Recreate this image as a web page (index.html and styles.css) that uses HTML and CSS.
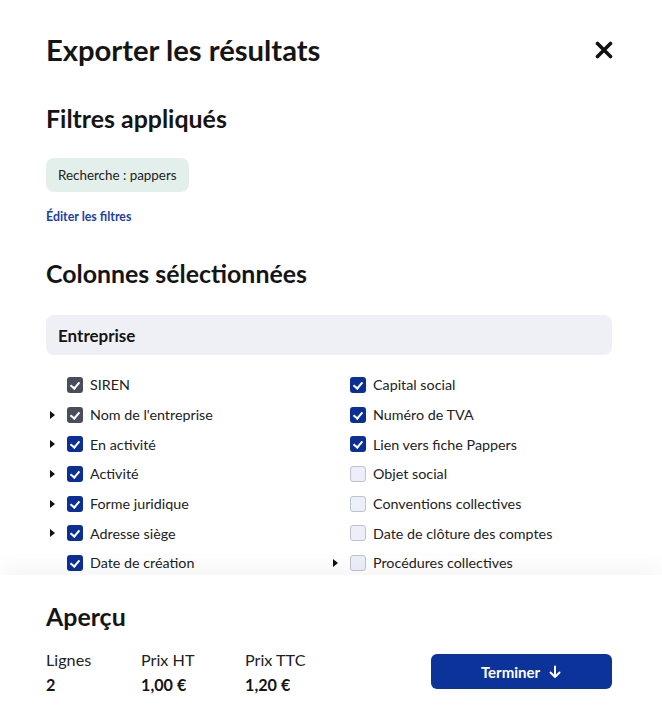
FILE: index.html
```html
<!DOCTYPE html>
<html lang="fr">
<head>
<meta charset="utf-8">
<link rel="stylesheet" href="styles.css">
</head>
<body>
<div class="modal">
  <div class="scroll">
    <header class="head">
      <h1 class="title">Exporter les résultats</h1>
      <button class="close" aria-label="Fermer">
        <svg width="18" height="18" viewBox="0 0 18 18"><path d="M2.5 2.5 L15.5 15.5 M15.5 2.5 L2.5 15.5" stroke="#111" stroke-width="3.6" stroke-linecap="round"/></svg>
      </button>
    </header>

    <h2 class="h2 h2-filters">Filtres appliqués</h2>
    <div class="chips"><span class="chip">Recherche : pappers</span></div>
    <a class="edit" href="#">Éditer les filtres</a>

    <h2 class="h2 h2-cols">Colonnes sélectionnées</h2>
    <div class="group">Entreprise</div>

    <div class="cols">
      <div class="col">
        <div class="row"><span class="caret none"></span><span class="cb locked"></span><span>SIREN</span></div>
        <div class="row"><span class="caret"></span><span class="cb locked"></span><span>Nom de l'entreprise</span></div>
        <div class="row"><span class="caret"></span><span class="cb on"></span><span>En activité</span></div>
        <div class="row"><span class="caret"></span><span class="cb on"></span><span>Activité</span></div>
        <div class="row"><span class="caret"></span><span class="cb on"></span><span>Forme juridique</span></div>
        <div class="row"><span class="caret"></span><span class="cb on"></span><span>Adresse siège</span></div>
        <div class="row"><span class="caret none"></span><span class="cb on"></span><span>Date de création</span></div>
      </div>
      <div class="col">
        <div class="row"><span class="caret none"></span><span class="cb on"></span><span>Capital social</span></div>
        <div class="row"><span class="caret none"></span><span class="cb on"></span><span>Numéro de TVA</span></div>
        <div class="row"><span class="caret none"></span><span class="cb on"></span><span>Lien vers fiche Pappers</span></div>
        <div class="row"><span class="caret none"></span><span class="cb"></span><span>Objet social</span></div>
        <div class="row"><span class="caret none"></span><span class="cb"></span><span>Conventions collectives</span></div>
        <div class="row"><span class="caret none"></span><span class="cb"></span><span>Date de clôture des comptes</span></div>
        <div class="row"><span class="caret"></span><span class="cb"></span><span>Procédures collectives</span></div>
      </div>
    </div>
  </div>

  <footer class="foot">
    <h2 class="h2">Aperçu</h2>
    <div class="foot-row">
      <div class="stats">
        <div class="stat"><div class="label">Lignes</div><div class="value">2</div></div>
        <div class="stat"><div class="label">Prix HT</div><div class="value">1,00 €</div></div>
        <div class="stat"><div class="label">Prix TTC</div><div class="value">1,20 €</div></div>
      </div>
      <button class="btn">Terminer
        <svg width="14" height="14" viewBox="0 0 14 14"><path d="M7 1.5 V12 M2.5 7.5 L7 12 L11.5 7.5" stroke="#fff" stroke-width="2" fill="none" stroke-linecap="round" stroke-linejoin="round"/></svg>
      </button>
    </div>
  </footer>
</div>
</body>
</html>
```

FILE: styles.css
```css
* { box-sizing: border-box; }
html, body { margin: 0; padding: 0; background: #fff; }
body {
  font-family: Lato, "Open Sans", "Liberation Sans", sans-serif;
  color: #151515;
}
.modal {
  height: 718px;
  display: flex;
  flex-direction: column;
  overflow: hidden;
}
.scroll {
  flex: 1;
  overflow: hidden;
  padding: 32px 50px 0 46px;
}
.head {
  display: flex;
  justify-content: space-between;
  align-items: center;
  height: 36px;
}
.title {
  margin: 0;
  font-size: 29.2px;
  line-height: 36px;
  font-weight: 700;
}
.close {
  border: 0;
  background: none;
  padding: 0;
  margin-right: -1px;
  width: 18px;
  height: 18px;
  display: flex;
}
.h2 {
  margin: 0;
  font-size: 24.9px;
  line-height: 32px;
  font-weight: 700;
}
.h2-filters { margin-top: 34px; }
.chips { margin-top: 24px; display: flex; }
.chip {
  background: #e3efea;
  border-radius: 8px;
  height: 34px;
  padding: 0 12px;
  display: inline-flex;
  align-items: center;
  font-size: 13.4px;
  color: #222;
}
.edit {
  display: block;
  margin-top: 17px;
  font-size: 12.4px;
  line-height: 16px;
  font-weight: 700;
  color: #1b3fa3;
  text-decoration: none;
}
.h2-cols { margin-top: 32px; }
.group {
  margin-top: 26px;
  height: 40px;
  background: #eef0f6;
  border-radius: 8px;
  padding: 0 12px;
  display: flex;
  align-items: center;
  font-size: 17px;
  font-weight: 700;
}
.cols {
  margin-top: 15px;
  display: grid;
  grid-template-columns: 283px 1fr;
}
.row {
  height: 29.7px;
  display: flex;
  align-items: center;
  font-size: 14.3px;
  color: #222;
}
.caret {
  width: 21px;
  height: 16px;
  flex: none;
  position: relative;
}
.caret::before {
  content: "";
  position: absolute;
  left: 4px;
  top: 4px;
  border-left: 5px solid #111;
  border-top: 4px solid transparent;
  border-bottom: 4px solid transparent;
}
.caret.none::before { display: none; }
.cb {
  width: 16px;
  height: 16px;
  flex: none;
  border-radius: 3px;
  margin-right: 7px;
  background: #eceff7;
  border: 1px solid #bcc2cf;
  position: relative;
}
.cb.on, .cb.locked {
  border: 0;
  background-color: #0c2f95;
}
.cb.locked { background-color: #4a4e5c; }
.cb.on::after, .cb.locked::after {
  content: "";
  position: absolute;
  left: 5px;
  top: 3px;
  width: 4px;
  height: 7px;
  border-right: 2px solid #fff;
  border-bottom: 2px solid #fff;
  transform: rotate(40deg);
}
.foot {
  height: 143px;
  flex: none;
  background: #fff;
  padding: 25px 50px 0 46px;
  box-shadow: 0 -10px 18px rgba(0, 0, 0, 0.035);
  position: relative;
}
.foot-row {
  margin-top: 16px;
  display: flex;
  justify-content: space-between;
  align-items: center;
}
.stats {
  display: grid;
  grid-template-columns: 95px 104px auto;
}
.label { font-size: 16.2px; line-height: 24px; color: #222; }
.value { font-size: 16.2px; line-height: 26px; font-weight: 700; }
.btn {
  width: 181px;
  height: 35px;
  margin-top: -3px;
  border: 0;
  border-radius: 6px;
  background: #0b3399;
  color: #fff;
  font-family: inherit;
  font-size: 15px;
  font-weight: 700;
  display: flex;
  align-items: center;
  justify-content: center;
  gap: 8px;
}
```
